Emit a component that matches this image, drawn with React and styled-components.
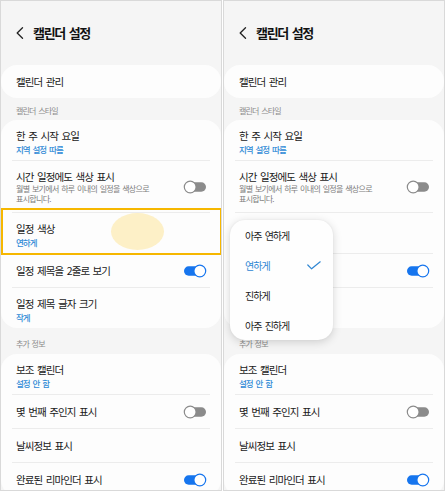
import React from "react";
import styled, { createGlobalStyle } from "styled-components";

const GlobalStyle = createGlobalStyle`
  html, body {
    margin: 0;
    padding: 0;
    background: #ffffff;
  }
  body {
    font-family: "Noto Sans CJK KR", "Noto Sans", sans-serif;
    color: #1c1c1c;
  }
`;

const Frame = styled.div`
  display: flex;
  gap: 1px;
  width: 446px;
  height: 497px;
`;

const Panel = styled.div`
  position: relative;
  width: 222px;
  height: 491px;
  box-sizing: border-box;
  border: 1px solid #d9d9d9;
  background: #f5f5f5;
  overflow: hidden;
`;

const Header = styled.div`
  display: flex;
  align-items: center;
  gap: 9px;
  height: 64px;
  padding-left: 15px;
`;

const Title = styled.h1`
  margin: 0;
  font-size: 13px;
  font-weight: 700;
  letter-spacing: -1.3px;
  word-spacing: 2px;
  line-height: 16px;
  color: #111;
`;

const Card = styled.div`
  background: #fdfdfd;
  border-radius: 16px;
`;

const SectionLabel = styled.div`
  padding: ${(p) => (p.$spaced ? "11px 15px 5px" : "8px 15px 4px")};
  font-size: 8px;
  line-height: 10px;
  letter-spacing: -0.8px;
  word-spacing: 1.5px;
  color: #8a8a8a;
`;

const Row = styled.div`
  display: flex;
  align-items: center;
  justify-content: space-between;
  padding: ${(p) => (p.$single ? "10px 14px 9px 15px" : "9px 14px 5px 15px")};
  padding-bottom: ${(p) => (p.$desc ? "8px" : undefined)};
`;

const TextCol = styled.div`
  display: flex;
  flex-direction: column;
  min-width: 0;
`;

const RowTitle = styled.div`
  font-size: 10.5px;
  line-height: 14px;
  letter-spacing: -0.9px;
  word-spacing: 2px;
  color: #1a1a1a;
  white-space: nowrap;
  visibility: ${(p) => (p.$covered ? "hidden" : "visible")};
`;

const RowSub = styled.div`
  font-size: 8.5px;
  line-height: 12px;
  letter-spacing: -1px;
  word-spacing: 2px;
  font-weight: 500;
  color: #2f8ad6;
  visibility: ${(p) => (p.$covered ? "hidden" : "visible")};
`;

const RowDesc = styled.div`
  font-size: 8px;
  line-height: 10px;
  letter-spacing: -0.7px;
  word-spacing: 1.5px;
  color: #7c7c7c;
  white-space: nowrap;
`;

const Divider = styled.div`
  height: 1px;
  margin: 0 11px;
  background: #ececec;
`;

const Highlight = styled.div`
  position: absolute;
  left: 0;
  top: 207px;
  width: 221px;
  height: 47px;
  box-sizing: border-box;
  border: 2px solid #f6b700;
`;

const TouchDot = styled.div`
  position: absolute;
  left: 110px;
  top: 212px;
  width: 53px;
  height: 37px;
  border-radius: 50%;
  background: #fdf0c7;
`;

const Popup = styled.div`
  position: absolute;
  left: 6px;
  top: 219px;
  width: 103px;
  border-radius: 15px;
  background: #fefefe;
  box-shadow: 0 2px 10px rgba(0, 0, 0, 0.16), 0 0 2px rgba(0, 0, 0, 0.06);
`;

const PopupItem = styled.div`
  display: flex;
  align-items: center;
  justify-content: space-between;
  height: 30px;
  padding: 0 12px 0 15px;
  font-size: 10px;
  letter-spacing: -1px;
  word-spacing: 2px;
  color: ${(p) => (p.$active ? "#2f86d3" : "#1c1c1c")};
`;

const BackIcon = () => (
  <svg width="8" height="12" viewBox="0 0 8 12">
    <polyline
      points="6.5,0.8 1.2,6 6.5,11.2"
      fill="none"
      stroke="#222"
      strokeWidth="1.3"
      strokeLinecap="round"
      strokeLinejoin="round"
    />
  </svg>
);

const CheckIcon = () => (
  <svg width="14" height="9" viewBox="0 0 14 9">
    <polyline
      points="0.8,4 4.6,7.8 13.2,0.8"
      fill="none"
      stroke="#2f86d3"
      strokeWidth="1.2"
      strokeLinecap="round"
      strokeLinejoin="round"
    />
  </svg>
);

const Toggle = ({ on }) =>
  on ? (
    <svg width="24" height="14" viewBox="0 0 24 14">
      <rect x="1" y="2.3" width="19" height="9.4" rx="4.7" fill="#1675ee" />
      <circle cx="16.8" cy="7" r="5.9" fill="#fff" stroke="#1675ee" strokeWidth="1.2" />
    </svg>
  ) : (
    <svg width="24" height="14" viewBox="0 0 24 14">
      <rect x="4" y="2.3" width="19" height="9.4" rx="4.7" fill="#8b8b8b" />
      <circle cx="7.2" cy="7" r="5.9" fill="#fff" stroke="#8b8b8b" strokeWidth="1.2" />
    </svg>
  );

const SettingsScreen = ({ covered = false, children }) => (
  <Panel>
    <Header>
      <BackIcon />
      <Title>캘린더 설정</Title>
    </Header>

    <Card>
      <Row $single>
        <RowTitle>캘린더 관리</RowTitle>
      </Row>
    </Card>

    <SectionLabel>캘린더 스타일</SectionLabel>
    <Card>
      <Row>
        <TextCol>
          <RowTitle>한 주 시작 요일</RowTitle>
          <RowSub>지역 설정 따름</RowSub>
        </TextCol>
      </Row>
      <Divider />
      <Row $desc>
        <TextCol>
          <RowTitle>시간 일정에도 색상 표시</RowTitle>
          <RowDesc>
            월별 보기에서 하루 이내의 일정을 색상으로
            <br />
            표시합니다.
          </RowDesc>
        </TextCol>
        <Toggle />
      </Row>
      <Divider />
      <Row>
        <TextCol>
          <RowTitle $covered={covered}>일정 색상</RowTitle>
          <RowSub $covered={covered}>연하게</RowSub>
        </TextCol>
      </Row>
      <Divider />
      <Row $single>
        <RowTitle $covered={covered}>일정 제목을 2줄로 보기</RowTitle>
        <Toggle on />
      </Row>
      <Divider />
      <Row>
        <TextCol>
          <RowTitle $covered={covered}>일정 제목 글자 크기</RowTitle>
          <RowSub $covered={covered}>작게</RowSub>
        </TextCol>
      </Row>
    </Card>

    <SectionLabel $spaced>추가 정보</SectionLabel>
    <Card>
      <Row>
        <TextCol>
          <RowTitle>보조 캘린더</RowTitle>
          <RowSub>설정 안 함</RowSub>
        </TextCol>
      </Row>
      <Divider />
      <Row $single>
        <RowTitle>몇 번째 주인지 표시</RowTitle>
        <Toggle />
      </Row>
      <Divider />
      <Row $single>
        <RowTitle>날씨정보 표시</RowTitle>
      </Row>
      <Divider />
      <Row $single>
        <RowTitle>완료된 리마인더 표시</RowTitle>
        <Toggle on />
      </Row>
    </Card>

    {children}
  </Panel>
);

const colorOptions = ["아주 연하게", "연하게", "진하게", "아주 진하게"];

export default function App() {
  return (
    <>
      <GlobalStyle />
      <Frame>
        <SettingsScreen>
          <Highlight />
          <TouchDot />
        </SettingsScreen>
        <SettingsScreen covered>
          <Popup>
            {colorOptions.map((label) => (
              <PopupItem key={label} $active={label === "연하게"}>
                <span>{label}</span>
                {label === "연하게" && <CheckIcon />}
              </PopupItem>
            ))}
          </Popup>
        </SettingsScreen>
      </Frame>
    </>
  );
}
